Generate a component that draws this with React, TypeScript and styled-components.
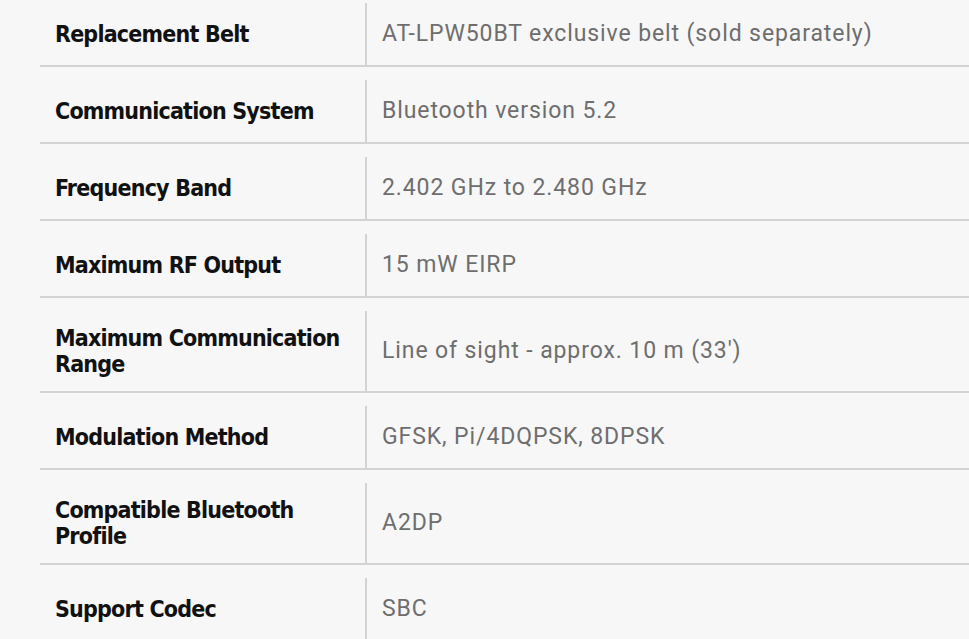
import React from "react";
import styled, { createGlobalStyle } from "styled-components";

const Global = createGlobalStyle`
  html, body { margin: 0; padding: 0; background: #f7f7f7; overflow: hidden; }
  * { box-sizing: border-box; }
`;

const Page = styled.div`
  padding-left: 40px;
  width: 969px;
  height: 639px;
  overflow: hidden;
`;

const SpecList = styled.dl`
  margin: -10px 0 0 0;
  padding: 0;
`;

const Row = styled.div`
  display: flex;
  padding-top: 13px;
  border-bottom: 2px solid #d3d3d3;
`;

const Label = styled.dt`
  width: 325px;
  flex: none;
  min-height: 62px;
  padding: 14px 10px 14px 15px;
  display: flex;
  align-items: center;
  font-family: "DejaVu Sans Condensed", "DejaVu Sans", sans-serif;
  font-stretch: condensed;
  font-weight: 700;
  font-size: 23px;
  letter-spacing: -0.8px;
  line-height: 26px;
  color: #111;
`;

const Value = styled.dd`
  margin: 0;
  flex: 1;
  min-height: 62px;
  border-left: 2px solid #d3d3d3;
  padding: 14px 15px;
  display: flex;
  align-items: center;
  font-family: "Roboto", "Liberation Sans", sans-serif;
  font-weight: 400;
  font-size: 23px;
  letter-spacing: 0.9px;
  line-height: 26px;
  color: #6e6e6e;
`;

const specs: [string, string][] = [
  ["Replacement Belt", "AT-LPW50BT exclusive belt (sold separately)"],
  ["Communication System", "Bluetooth version 5.2"],
  ["Frequency Band", "2.402 GHz to 2.480 GHz"],
  ["Maximum RF Output", "15 mW EIRP"],
  ["Maximum Communication Range", "Line of sight - approx. 10 m (33')"],
  ["Modulation Method", "GFSK, Pi/4DQPSK, 8DPSK"],
  ["Compatible Bluetooth Profile", "A2DP"],
  ["Support Codec", "SBC"],
];

export default function App() {
  return (
    <>
      <Global />
      <Page>
        <SpecList>
          {specs.map(([k, v]) => (
            <Row key={k}>
              <Label>{k}</Label>
              <Value>{v}</Value>
            </Row>
          ))}
        </SpecList>
      </Page>
    </>
  );
}
